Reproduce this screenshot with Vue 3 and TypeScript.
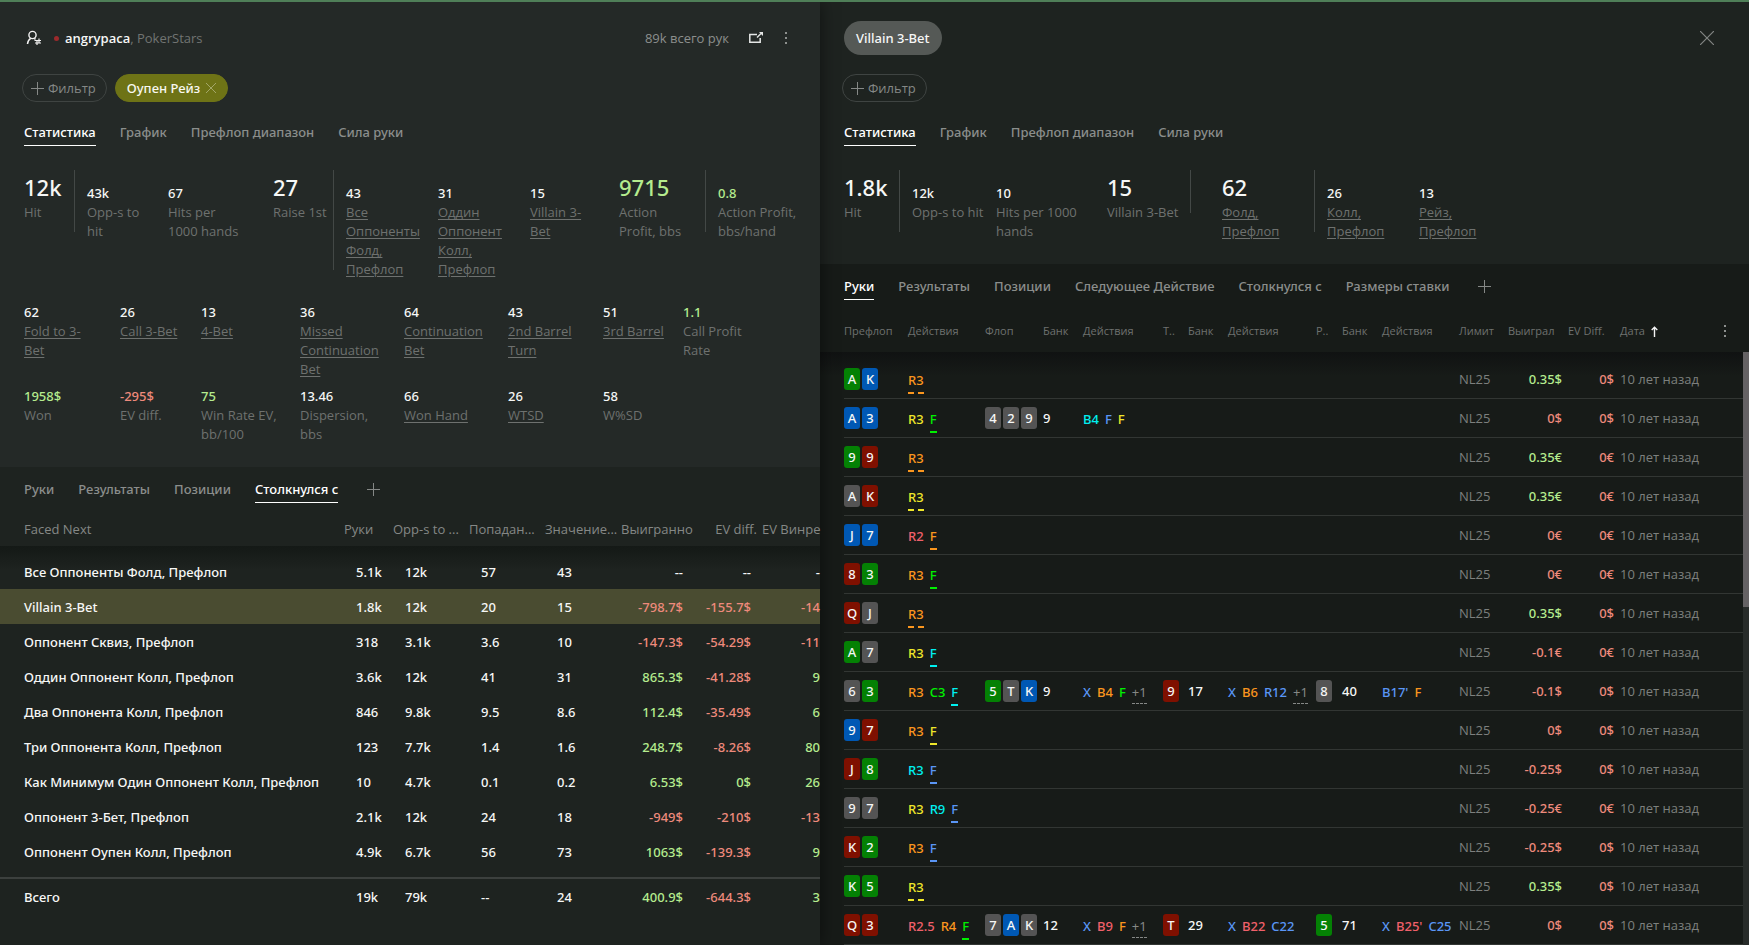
<script setup lang="ts">
interface Stat {
  value: string
  label: string
  link?: boolean
  big?: boolean
  tone?: 'pos' | 'neg'
  barBefore?: boolean
  barAfter?: boolean
}

interface FacedRow {
  name: string
  counts: string[]
  money: string[]
  active?: boolean
}

interface Hand {
  hole: string[]
  preflop: string[]
  flop?: string[]
  flopPot?: string
  flopActs?: string[]
  turn?: string[]
  turnPot?: string
  turnActs?: string[]
  river?: string[]
  riverPot?: string
  riverActs?: string[]
  won: string
  ev: string
}

const mainTabs = ['Статистика', 'График', 'Префлоп диапазон', 'Сила руки']
const leftTabs = ['Руки', 'Результаты', 'Позиции', 'Столкнулся с']
const rightTabs = ['Руки', 'Результаты', 'Позиции', 'Следующее Действие', 'Столкнулся с', 'Размеры ставки']

const topStats: Stat[] = [
  { value: '12k', label: 'Hit', big: true },
  { value: '43k', label: 'Opp-s to\nhit', barBefore: true },
  { value: '67', label: 'Hits per\n1000 hands' },
  { value: '27', label: 'Raise 1st', big: true },
  { value: '43', label: 'Все\nОппоненты\nФолд,\nПрефлоп', link: true, barBefore: true },
  { value: '31', label: 'Оддин\nОппонент\nКолл,\nПрефлоп', link: true },
  { value: '15', label: 'Villain 3-\nBet', link: true },
  { value: '9715', label: 'Action\nProfit, bbs', big: true, tone: 'pos' },
  { value: '0.8', label: 'Action Profit,\nbbs/hand', tone: 'pos', barBefore: true },
]

const moreStats: Stat[] = [
  { value: '62', label: 'Fold to 3-\nBet', link: true },
  { value: '26', label: 'Call 3-Bet', link: true },
  { value: '13', label: '4-Bet', link: true },
  { value: '36', label: 'Missed\nContinuation\nBet', link: true },
  { value: '64', label: 'Continuation\nBet', link: true },
  { value: '43', label: '2nd Barrel\nTurn', link: true },
  { value: '51', label: '3rd Barrel', link: true },
  { value: '1.1', label: 'Call Profit\nRate', tone: 'pos' },
  { value: '1958$', label: 'Won', tone: 'pos' },
  { value: '-295$', label: 'EV diff.', tone: 'neg' },
  { value: '75', label: 'Win Rate EV,\nbb/100', tone: 'pos' },
  { value: '13.46', label: 'Dispersion,\nbbs' },
  { value: '66', label: 'Won Hand', link: true },
  { value: '26', label: 'WTSD', link: true },
  { value: '58', label: 'W%SD' },
]

const villainStats: Stat[] = [
  { value: '1.8k', label: 'Hit', big: true },
  { value: '12k', label: 'Opp-s to hit\n ', barBefore: true },
  { value: '10', label: 'Hits per 1000\nhands' },
  { value: '15', label: 'Villain 3-Bet', big: true, barAfter: true },
  { value: '62', label: 'Фолд,\nПрефлоп', big: true, link: true },
  { value: '26', label: 'Колл,\nПрефлоп', link: true, barBefore: true },
  { value: '13', label: 'Рейз,\nПрефлоп', link: true },
]

const faced: FacedRow[] = [
  { name: 'Все Оппоненты Фолд, Префлоп', counts: ['5.1k', '12k', '57', '43'], money: ['--', '--', '-'] },
  { name: 'Villain 3-Bet', counts: ['1.8k', '12k', '20', '15'], money: ['-798.7$', '-155.7$', '-14'], active: true },
  { name: 'Оппонент Сквиз, Префлоп', counts: ['318', '3.1k', '3.6', '10'], money: ['-147.3$', '-54.29$', '-11'] },
  { name: 'Оддин Оппонент Колл, Префлоп', counts: ['3.6k', '12k', '41', '31'], money: ['865.3$', '-41.28$', '9'] },
  { name: 'Два Оппонента Колл, Префлоп', counts: ['846', '9.8k', '9.5', '8.6'], money: ['112.4$', '-35.49$', '6'] },
  { name: 'Три Оппонента Колл, Префлоп', counts: ['123', '7.7k', '1.4', '1.6'], money: ['248.7$', '-8.26$', '80'] },
  { name: 'Как Минимум Один Оппонент Колл, Префлоп', counts: ['10', '4.7k', '0.1', '0.2'], money: ['6.53$', '0$', '26'] },
  { name: 'Оппонент 3-Бет, Префлоп', counts: ['2.1k', '12k', '24', '18'], money: ['-949$', '-210$', '-13'] },
  { name: 'Оппонент Оупен Колл, Префлоп', counts: ['4.9k', '6.7k', '56', '73'], money: ['1063$', '-139.3$', '9'] },
]
const total: FacedRow = { name: 'Всего', counts: ['19k', '79k', '--', '24'], money: ['400.9$', '-644.3$', '3'] }

function moneyTone(v: string): string {
  if (/^-+$/.test(v)) return ''
  return v.startsWith('-') ? 'neg' : 'pos'
}

// Cards are "rank + suit letter": g clubs, b diamonds, r hearts, k spades.
// Actions are "colour:text", with a trailing "_" when the hero's move is marked.
const hands: Hand[] = [
  { hole: ['Ag', 'Kb'], preflop: ['orange:R3_'], won: '0.35$', ev: '0$' },
  { hole: ['Ab', '3b'], preflop: ['yellow:R3', 'green:F_'], flop: ['4k', '2k', '9k'], flopPot: '9', flopActs: ['cyan:B4', 'blue:F', 'yellow:F'], won: '0$', ev: '0$' },
  { hole: ['9g', '9r'], preflop: ['orange:R3_'], won: '0.35€', ev: '0€' },
  { hole: ['Ak', 'Kr'], preflop: ['yellow:R3_'], won: '0.35€', ev: '0€' },
  { hole: ['Jb', '7b'], preflop: ['red:R2', 'orange:F_'], won: '0€', ev: '0€' },
  { hole: ['8r', '3g'], preflop: ['orange:R3', 'green:F_'], won: '0€', ev: '0€' },
  { hole: ['Qr', 'Jk'], preflop: ['orange:R3_'], won: '0.35$', ev: '0$' },
  { hole: ['Ag', '7k'], preflop: ['yellow:R3', 'cyan:F_'], won: '-0.1€', ev: '0€' },
  {
    hole: ['6k', '3g'], preflop: ['orange:R3', 'green:C3', 'cyan:F_'],
    flop: ['5g', 'Tk', 'Kb'], flopPot: '9', flopActs: ['blue:X', 'orange:B4', 'green:F', 'more:+1'],
    turn: ['9r'], turnPot: '17', turnActs: ['blue:X', 'orange:B6', 'blue:R12', 'more:+1'],
    river: ['8k'], riverPot: '40', riverActs: ["blue:B17'", 'orange:F'], won: '-0.1$', ev: '0$',
  },
  { hole: ['9b', '7r'], preflop: ['orange:R3', 'yellow:F_'], won: '0$', ev: '0$' },
  { hole: ['Jr', '8g'], preflop: ['cyan:R3', 'blue:F_'], won: '-0.25$', ev: '0$' },
  { hole: ['9k', '7k'], preflop: ['yellow:R3', 'cyan:R9', 'blue:F_'], won: '-0.25€', ev: '0€' },
  { hole: ['Kr', '2g'], preflop: ['orange:R3', 'blue:F_'], won: '-0.25$', ev: '0$' },
  { hole: ['Kg', '5g'], preflop: ['yellow:R3_'], won: '0.35$', ev: '0$' },
  {
    hole: ['Qr', '3r'], preflop: ['red:R2.5', 'orange:R4', 'green:F_'],
    flop: ['7k', 'Ab', 'Kk'], flopPot: '12', flopActs: ['blue:X', 'red:B9', 'orange:F', 'more:+1'],
    turn: ['Tr'], turnPot: '29', turnActs: ['blue:X', 'red:B22', 'blue:C22'],
    river: ['5g'], riverPot: '71', riverActs: ['blue:X', "red:B25'", 'blue:C25'], won: '0$', ev: '0$',
  },
]

interface Cell { kind: 'cards' | 'pot' | 'acts'; items: { text: string; cls: string }[] }

const toCards = (c: string[] = []): Cell => ({
  kind: 'cards',
  items: c.map((x) => ({ text: x[0], cls: 'suit-' + x[1] })),
})
const toPot = (p?: string): Cell => ({ kind: 'pot', items: p ? [{ text: p, cls: '' }] : [] })
const toActs = (a: string[] = []): Cell => ({
  kind: 'acts',
  items: a.map((x) => {
    const [color, text] = x.split(':')
    return { text: text.replace('_', ''), cls: 'act-' + color + (text.endsWith('_') ? ' marked' : '') }
  }),
})

const handRows = hands.map((h) => ({
  won: h.won,
  ev: h.ev,
  cells: [
    toCards(h.hole), toActs(h.preflop),
    toCards(h.flop), toPot(h.flopPot), toActs(h.flopActs),
    toCards(h.turn), toPot(h.turnPot), toActs(h.turnActs),
    toCards(h.river), toPot(h.riverPot), toActs(h.riverActs),
  ],
}))

const handHeads = ['Префлоп', 'Действия', 'Флоп', 'Банк', 'Действия', 'Т..', 'Банк', 'Действия', 'Р..', 'Банк', 'Действия', 'Лимит', 'Выиграл', 'EV Diff.']
</script>

<template>
  <div class="window">
    <section class="panel left">
      <div class="upper">
        <header class="head">
          <svg class="user-icon" width="17" height="16" viewBox="0 0 17 16" fill="none" stroke="#f2f2f2">
            <circle cx="6.5" cy="5" r="3.6" stroke-width="1.4" />
            <path d="M1.500 14c.3-3 1.300-4.600 3.200-5.600M8.300 8.400l1.200 1" stroke-width="1.500" />
            <path d="M8.500 10.500h6.500M13 8.500v4M15 13h-6M11 11v4" stroke-width="1.200" />
          </svg>
          <span class="dot"></span>
          <strong class="nick">angrypaca</strong><span class="room">, PokerStars</span>
          <span class="total-hands">89k всего рук</span>
          <button class="icon-btn popout" aria-label="Открыть в окне">
            <svg width="16" height="14" viewBox="0 0 16 14" fill="none" stroke="#e4e6e5">
              <path d="M9 3.500H1.800v7.800h10.400V7" stroke-width="1.500" />
              <path d="M9 6.500l4-4" stroke-width="1.500" />
              <path d="M11 1h4v4z" fill="#e4e6e5" stroke="none" />
            </svg>
          </button>
          <button class="icon-btn" aria-label="Меню">
            <svg width="4" height="14" viewBox="0 0 4 14" fill="#8d908e">
              <rect x="1" y="1" width="2" height="2" /><rect x="1" y="6" width="2" height="2" /><rect x="1" y="11" width="2" height="2" />
            </svg>
          </button>
        </header>

        <div class="filters">
          <button class="pill">
            <svg width="13" height="13" viewBox="0 0 13 13" stroke="#858886"><path d="M6.500 0v13M0 6.500h13" /></svg>
            Фильтр
          </button>
          <button class="pill olive">
            Оупен Рейз
            <svg width="10" height="10" viewBox="0 0 10 10" stroke="#a3a768"><path d="M0 0l10 10M10 0L0 10" /></svg>
          </button>
        </div>

        <nav class="tabs" role="tablist">
          <button v-for="(t, i) in mainTabs" :key="t" role="tab" class="tab" :class="{ on: i === 0 }" :aria-selected="i === 0">{{ t }}</button>
        </nav>

        <div class="stats stats-top">
          <div v-for="(s, i) in topStats" :key="i" class="stat-slot">
            <span v-if="s.barBefore" class="bar before"></span>
            <div class="stat">
              <span class="num" :class="[s.tone, { big: s.big }]">{{ s.value }}</span>
              <a v-if="s.link" href="#" class="label">{{ s.label }}</a>
              <span v-else class="label">{{ s.label }}</span>
            </div>
          </div>
        </div>

        <div class="stats stats-more">
          <div v-for="(s, i) in moreStats" :key="i" class="stat">
            <span class="num" :class="s.tone">{{ s.value }}</span>
            <a v-if="s.link" href="#" class="label">{{ s.label }}</a>
            <span v-else class="label">{{ s.label }}</span>
          </div>
        </div>
      </div>

      <div class="lower">
        <nav class="tabs" role="tablist">
          <button v-for="(t, i) in leftTabs" :key="t" role="tab" class="tab" :class="{ on: i === 3 }" :aria-selected="i === 3">{{ t }}</button>
          <button class="add" aria-label="Добавить вкладку">
            <svg width="13" height="13" viewBox="0 0 13 13" stroke="#858886"><path d="M6.500 0v13M0 6.500h13" /></svg>
          </button>
        </nav>

        <table class="faced">
          <colgroup>
            <col /><col class="w49" /><col class="w76" /><col class="w76" /><col class="w76" />
            <col class="w73" /><col class="w68" /><col class="w58" />
          </colgroup>
          <thead>
            <tr>
              <th class="name">Faced Next</th>
              <th>Руки</th><th>Opp-s to ...</th><th>Попадан...</th><th>Значение...</th>
              <th class="r">Выигранно</th><th class="r">EV diff.</th><th>EV Винре</th>
            </tr>
          </thead>
          <tbody>
            <tr v-for="row in faced" :key="row.name" :class="{ active: row.active }">
              <td class="name">{{ row.name }}</td>
              <td v-for="(c, i) in row.counts" :key="'c' + i" class="count">{{ c }}</td>
              <td v-for="(m, i) in row.money" :key="'m' + i" class="money" :class="moneyTone(m)">{{ m }}</td>
            </tr>
          </tbody>
          <tfoot>
            <tr>
              <td class="name">{{ total.name }}</td>
              <td v-for="(c, i) in total.counts" :key="'c' + i" class="count">{{ c }}</td>
              <td v-for="(m, i) in total.money" :key="'m' + i" class="money" :class="moneyTone(m)">{{ m }}</td>
            </tr>
          </tfoot>
        </table>
      </div>
    </section>

    <section class="panel right">
      <div class="upper">
        <header class="head">
          <button class="crumb">Villain 3-Bet</button>
          <button class="icon-btn close" aria-label="Закрыть">
            <svg width="14" height="14" viewBox="0 0 14 14" stroke="#828583" stroke-width="1.200"><path d="M0 0l14 14M14 0L0 14" /></svg>
          </button>
        </header>

        <div class="filters">
          <button class="pill">
            <svg width="13" height="13" viewBox="0 0 13 13" stroke="#858886"><path d="M6.500 0v13M0 6.500h13" /></svg>
            Фильтр
          </button>
        </div>

        <nav class="tabs" role="tablist">
          <button v-for="(t, i) in mainTabs" :key="t" role="tab" class="tab" :class="{ on: i === 0 }" :aria-selected="i === 0">{{ t }}</button>
        </nav>

        <div class="stats stats-villain">
          <div v-for="(s, i) in villainStats" :key="i" class="stat-slot">
            <span v-if="s.barBefore" class="bar before"></span>
            <div class="stat">
              <span class="num" :class="[s.tone, { big: s.big }]">{{ s.value }}</span>
              <a v-if="s.link" href="#" class="label">{{ s.label }}</a>
              <span v-else class="label">{{ s.label }}</span>
            </div>
            <span v-if="s.barAfter" class="bar after"></span>
          </div>
        </div>
      </div>

      <div class="lower">
        <nav class="tabs" role="tablist">
          <button v-for="(t, i) in rightTabs" :key="t" role="tab" class="tab" :class="{ on: i === 0 }" :aria-selected="i === 0">{{ t }}</button>
          <button class="add" aria-label="Добавить вкладку">
            <svg width="13" height="13" viewBox="0 0 13 13" stroke="#858886"><path d="M6.500 0v13M0 6.500h13" /></svg>
          </button>
        </nav>

        <table class="hands">
          <colgroup>
            <col class="h64" /><col class="h77" /><col class="h58" /><col class="h40" /><col class="h80" />
            <col class="h25" /><col class="h40" /><col class="h88" /><col class="h26" /><col class="h40" />
            <col class="h77" /><col class="h49" /><col class="h60" /><col class="h52" /><col />
          </colgroup>
          <thead>
            <tr>
              <th v-for="(h, i) in handHeads" :key="i">{{ h }}</th>
              <th>
                <div class="date-head">
                  <span>Дата</span>
                  <svg width="7" height="11" viewBox="0 0 7 11" fill="none" stroke="#f4f4f4"><path d="M3.500 11V1.500M.7 4l2.800-2.800L6.300 4" stroke-width="1.400" /></svg>
                  <button class="icon-btn dots" aria-label="Столбцы">
                    <svg width="4" height="14" viewBox="0 0 4 14" fill="#8d908e">
                      <rect x="1" y="1" width="2" height="2" /><rect x="1" y="6" width="2" height="2" /><rect x="1" y="11" width="2" height="2" />
                    </svg>
                  </button>
                </div>
              </th>
            </tr>
          </thead>
          <tbody>
            <tr v-for="(row, r) in handRows" :key="r">
              <td v-for="(cell, c) in row.cells" :key="c">
                <div :class="cell.kind">
                  <span v-for="(it, k) in cell.items" :key="k" :class="it.cls">{{ it.text }}</span>
                </div>
              </td>
              <td class="dim">NL25</td>
              <td class="cash" :class="row.won.startsWith('0.') ? 'pos' : 'neg'">{{ row.won }}</td>
              <td class="cash neg">{{ row.ev }}</td>
              <td class="dim">10 лет назад</td>
            </tr>
          </tbody>
        </table>
        <div class="scroll"><div class="thumb"></div></div>
      </div>
    </section>
  </div>
</template>

<style>
body {
  margin: 0;
  background: #1e2320;
}
</style>

<style scoped>
.window {
  box-sizing: border-box;
  display: grid;
  grid-template-columns: minmax(0, 820fr) minmax(0, 929fr);
  height: 100vh;
  overflow: hidden;
  border-top: 2px solid #4f7f58;
  background: #1e2320;
  color: #f6f7f6;
  font-family: "Open Sans", "Noto Sans", sans-serif;
  font-size: 13px;
  line-height: 19px;
}

button {
  margin: 0;
  padding: 0;
  border: 0;
  background: none;
  color: inherit;
  font: inherit;
  cursor: pointer;
}

svg {
  display: block;
  flex: none;
}

.panel {
  display: flex;
  flex-direction: column;
  min-width: 0;
}

.left {
  z-index: 1;
  box-shadow: 0 0 18px rgba(0, 0, 0, 0.5);
  border-top-left-radius: 4px;
  clip-path: inset(0 -24px 0 0);
}

.left .upper {
  background: #242927;
}

.right .upper {
  background: #1e2320;
}

.upper {
  padding: 19px 24px 23px;
}

.head {
  display: flex;
  align-items: center;
  height: 34px;
  margin-bottom: 19px;
}

.user-icon {
  margin-left: 2px;
}

.dot {
  width: 5px;
  height: 5px;
  margin: 0 6px 0 11px;
  border-radius: 50%;
  background: #9c2a2c;
}

.nick {
  font-weight: 600;
}

.room {
  color: #717472;
}

.total-hands {
  margin-left: auto;
  color: #8c8f8d;
}

.popout {
  margin-left: 19px;
}

.popout + .icon-btn {
  margin: 0 8px 0 20px;
}

.close {
  margin: 0 11px 0 auto;
}

.crumb,
.olive,
.tab,
.faced td,
.cards,
.acts,
.pot,
.hands .cash,
.num {
  font-family: "Noto Sans", "Open Sans", sans-serif;
  font-weight: 500;
}

.crumb {
  height: 34px;
  padding: 0 12px;
  border-radius: 17px;
  background: #555956;
}

.filters {
  display: flex;
  gap: 8px;
  margin: 0 -2px 20px;
}

.pill {
  display: flex;
  align-items: center;
  gap: 4px;
  box-sizing: border-box;
  height: 28px;
  padding: 0 10px 0 8px;
  border: 1px solid #3f4442;
  border-radius: 14px;
  color: #858886;
}

.olive {
  gap: 6px;
  padding: 0 11px;
  border-color: #6e7316;
  background: #6e7316;
  color: #f8f8f0;
}

.tabs {
  display: flex;
  align-items: center;
  gap: 24px;
}

.tab {
  padding-bottom: 3px;
  border-bottom: 1px solid transparent;
  color: #8b8e8c;
  line-height: 20px;
  white-space: nowrap;
}

.tab.on {
  border-bottom-color: #ffffff;
  color: #ffffff;
}

.add {
  margin: 0 0 4px 5px;
}

.stats {
  display: grid;
  align-items: start;
}

.stats-top {
  grid-template-columns:
    minmax(0, 50fr) minmax(0, 94fr) minmax(0, 105fr) minmax(0, 60fr) minmax(0, 105fr)
    minmax(0, 92fr) minmax(0, 89fr) minmax(0, 86fr) minmax(0, 91fr);
  margin-top: 33px;
}

.stats-villain {
  grid-template-columns:
    minmax(0, 55fr) minmax(0, 97fr) minmax(0, 111fr) minmax(0, 115fr) minmax(0, 92fr)
    minmax(0, 105fr) minmax(0, 306fr);
  margin-top: 33px;
}

.stats-more {
  grid-template-columns:
    minmax(0, 96fr) minmax(0, 81fr) minmax(0, 99fr) minmax(0, 104fr) minmax(0, 104fr)
    minmax(0, 95fr) minmax(0, 80fr) minmax(0, 113fr);
  row-gap: 8px;
  margin-top: 24px;
}

.stat-slot {
  display: flex;
}

.stat-slot .num {
  padding-top: 5px;
}

.stat-slot .num.big {
  padding: 0 0 8px;
}

.bar {
  flex: none;
  width: 1px;
  margin-top: -9px;
  margin-bottom: 9px;
  background: #434846;
}

.before {
  margin-right: 12px;
}

.after {
  margin-left: 12px;
}

.stat {
  white-space: pre;
}

.num,
.label {
  display: block;
}

.num.big {
  font-size: 22px;
  line-height: 16px;
}

.label {
  color: #6e716f;
}

a.label {
  width: max-content;
  text-decoration: underline;
  text-underline-offset: 2px;
}

.pos {
  color: #b5ec8e;
}

.neg {
  color: #ee8a7c;
}

.lower {
  flex: 1;
  min-height: 0;
  padding-top: 12px;
  background-repeat: no-repeat;
  background-size: 100% 24px;
}

.left .lower {
  background-color: #1e2320;
  background-image: linear-gradient(#141916, #1e2320);
  background-position: 0 79px;
}

.right .lower {
  position: relative;
  background-color: #171b18;
  background-image: linear-gradient(#101212, #171b18);
  background-position: 0 88px;
}

.lower .tabs {
  padding: 0 24px;
}

table {
  table-layout: fixed;
  border-spacing: 0;
}

th,
td {
  padding: 0;
  text-align: left;
  white-space: nowrap;
}

.faced {
  width: 100%;
}

.faced th {
  padding: 17px 0 7px;
  color: #858886;
  font-weight: 400;
}

.faced td {
  height: 33px;
  padding-top: 2px;
}

.faced .name {
  padding-left: 24px;
}

.faced th.r {
  padding-right: 5px;
  text-align: right;
}

.faced td.count {
  padding-left: 12px;
}

.faced td.money {
  padding-right: 11px;
  text-align: right;
}

.faced td.money:last-child {
  padding-right: 0;
}

.faced tbody tr:first-child td {
  padding-top: 10px;
}

.faced tbody tr:last-child td {
  padding-bottom: 8px;
}

.faced tfoot td {
  border-top: 2px solid #3c403e;
}

.active td {
  background: #4a4c31;
}

.w49 { width: 49px; }
.w58 { width: 58px; }
.w68 { width: 68px; }
.w73 { width: 73px; }
.w76 { width: 76px; }

.hands {
  width: calc(100% - 30px);
  margin-left: 24px;
}

.hands th {
  padding: 21px 0 11px;
  color: #6e716f;
  font-size: 11px;
  font-weight: 400;
  line-height: 20px;
}

.date-head {
  display: flex;
  align-items: center;
  gap: 6px;
}

.dots {
  margin: 0 16px 0 auto;
}

.hands td {
  height: 38px;
  border-bottom: 1px solid #323633;
}

.hands tbody tr:first-child td {
  padding-top: 8px;
}

.cards {
  display: flex;
  gap: 2px;
}

.cards span {
  width: 16px;
  border-radius: 3px;
  line-height: 22px;
  text-align: center;
}

.suit-g { background: #048104; }
.suit-b { background: #0058b4; }
.suit-r { background: #7f1000; }
.suit-k { background: #545454; }

.acts {
  display: flex;
  gap: 6px;
  padding-top: 6px;
}

.acts span {
  height: 22px;
  border-bottom: 2px solid transparent;
  line-height: 20px;
}

.acts .marked {
  border-bottom: 2px dashed currentColor;
}

.acts .act-more {
  height: 21px;
  border-bottom: 1px dashed currentColor;
  font-weight: 400;
}

.act-orange { color: #fa961e; }
.act-yellow { color: #eee62a; }
.act-green { color: #00f000; }
.act-cyan { color: #00f0f0; }
.act-blue { color: #5a96f5; }
.act-red { color: #f0606a; }
.act-more { color: #858886; }

.dim {
  color: #7d807e;
}

.hands .cash {
  padding-right: 6px;
  text-align: right;
}

.h25 { width: 25px; }
.h26 { width: 26px; }
.h40 { width: 40px; }
.h49 { width: 49px; }
.h52 { width: 52px; }
.h58 { width: 58px; }
.h60 { width: 60px; }
.h64 { width: 64px; }
.h77 { width: 77px; }
.h80 { width: 80px; }
.h88 { width: 88px; }

.scroll {
  position: absolute;
  top: 88px;
  right: 0;
  bottom: 0;
  width: 6px;
  background: #282c2a;
}

.thumb {
  height: 43%;
  background: #656264;
}
</style>
